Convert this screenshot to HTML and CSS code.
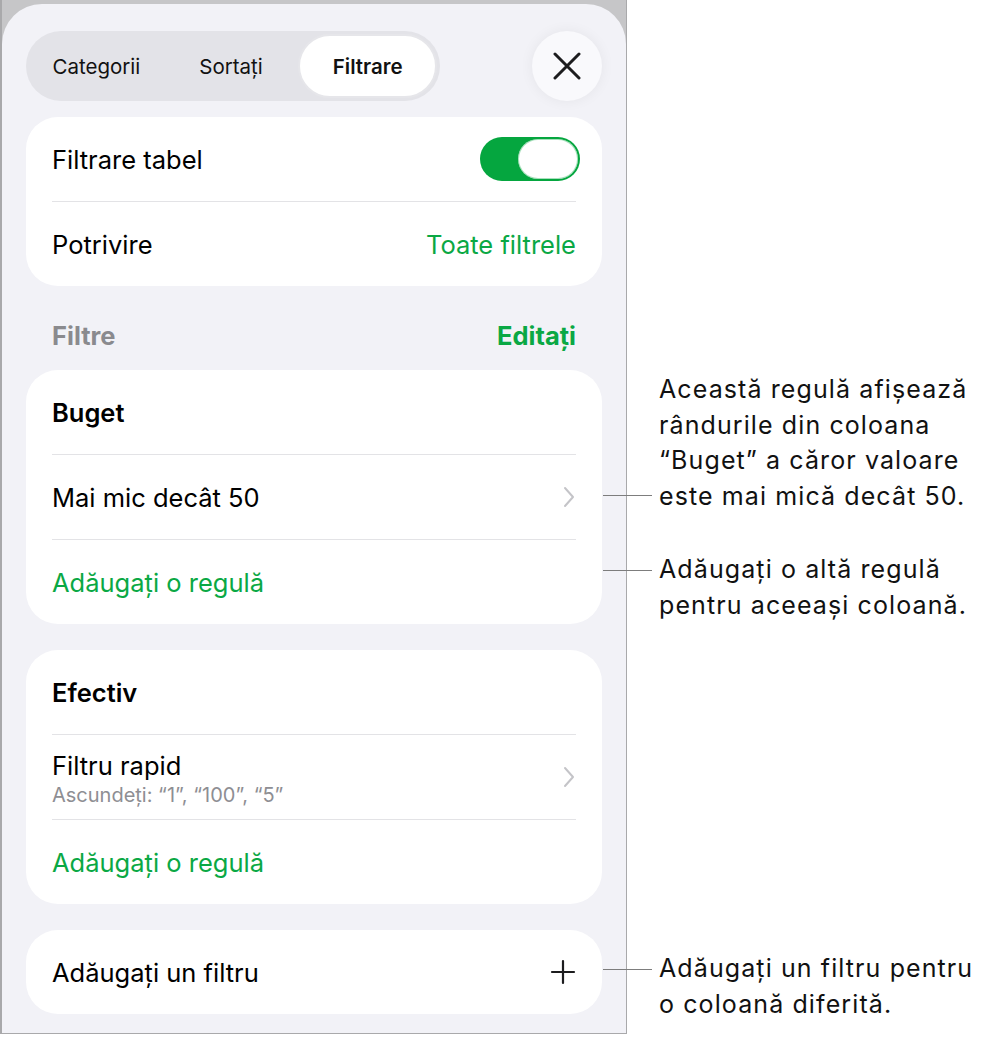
FILE: index.html
```html
<!DOCTYPE html>
<html lang="ro">
<head>
  <meta charset="utf-8">
  <title>Filtrare tabel</title>
  <link rel="stylesheet" href="styles.css">
</head>
<body>
  <div class="page">
    <div class="frame">
      <div class="sheet">
        <div class="top-bar">
          <div class="segmented">
            <div class="segment">Categorii</div>
            <div class="segment">Sortați</div>
            <div class="segment selected">Filtrare</div>
          </div>
          <div class="close-btn">
            <svg width="28" height="28" viewBox="0 0 28 28">
              <path d="M2 2 L26 26 M26 2 L2 26" stroke="#1c1c1e" stroke-width="3" stroke-linecap="round" fill="none"/>
            </svg>
          </div>
        </div>

        <div class="card">
          <div class="row">
            <span>Filtrare tabel</span>
            <div class="toggle"><div class="knob"></div></div>
          </div>
          <div class="row">
            <span>Potrivire</span>
            <span class="green">Toate filtrele</span>
          </div>
        </div>

        <div class="section-header">
          <span class="muted">Filtre</span>
          <span class="green">Editați</span>
        </div>

        <div class="card">
          <div class="row"><span class="bold">Buget</span></div>
          <div class="row">
            <span>Mai mic decât 50</span>
            <svg class="chevron" width="12" height="22" viewBox="0 0 12 22">
              <path d="M2 2 L10 11 L2 20" stroke="#c4c4c8" stroke-width="2" stroke-linecap="round" stroke-linejoin="round" fill="none"/>
            </svg>
          </div>
          <div class="row"><span class="green">Adăugați o regulă</span></div>
        </div>

        <div class="card">
          <div class="row"><span class="bold">Efectiv</span></div>
          <div class="row">
            <div class="two-line">
              <span>Filtru rapid</span>
              <span class="sub">Ascundeți: “1”, “100”, “5”</span>
            </div>
            <svg class="chevron" width="12" height="22" viewBox="0 0 12 22">
              <path d="M2 2 L10 11 L2 20" stroke="#c4c4c8" stroke-width="2" stroke-linecap="round" stroke-linejoin="round" fill="none"/>
            </svg>
          </div>
          <div class="row"><span class="green">Adăugați o regulă</span></div>
        </div>

        <div class="card">
          <div class="row">
            <span>Adăugați un filtru</span>
            <svg class="plus" width="26" height="26" viewBox="0 0 26 26">
              <path d="M13 2 V24 M2 13 H24" stroke="#1c1c1e" stroke-width="2.2" stroke-linecap="round" fill="none"/>
            </svg>
          </div>
        </div>
      </div>
    </div>

    <!-- callouts pointing at rows in the sheet -->
    <div class="callout callout-rule">
      <span class="leader"></span>
      <p>Această regulă afișează<br>rândurile din coloana<br>“Buget” a căror valoare<br>este mai mică decât 50.</p>
    </div>
    <div class="callout callout-add-rule">
      <span class="leader"></span>
      <p>Adăugați o altă regulă<br>pentru aceeași coloană.</p>
    </div>
    <div class="callout callout-add-filter">
      <span class="leader"></span>
      <p>Adăugați un filtru pentru<br>o coloană diferită.</p>
    </div>
  </div>
</body>
</html>
```

FILE: styles.css
```css
body {
  margin: 0;
  background-color: #fff;
  font-family: Inter, "Noto Sans", sans-serif;
  color: #000;
}

.page {
  position: relative;
  width: 987px;
  height: 1037px;
}

.frame {
  width: 627px;
  height: 1034px;
  padding-top: 4px;
  box-sizing: border-box;
  background-color: #c6c6c8;
  border: 1px solid #a9a9ab;
  border-top: none;
  border-left-width: 2px;
}

.sheet {
  height: 100%;
  background-color: #f2f2f7;
  border-radius: 40px 40px 0 0;
  padding: 27px 24px 0;
  box-sizing: border-box;
}

.top-bar {
  display: flex;
  justify-content: space-between;
  align-items: center;
  margin-bottom: 16px;
}

.segmented {
  display: flex;
  width: 414px;
  height: 70px;
  padding: 3px;
  box-sizing: border-box;
  background-color: #e3e3e8;
  border-radius: 35px;
}

.segment {
  flex: 1;
  display: flex;
  align-items: center;
  justify-content: center;
  font-size: 20.5px;
  color: #111;
}

.segment.selected {
  background-color: #fff;
  border: 2px solid #e6e6ea;
  border-radius: 32px;
  font-weight: 600;
}

.close-btn {
  width: 70px;
  height: 70px;
  border-radius: 50%;
  background-color: #f9f9fc;
  box-shadow: 0 0 14px rgba(0, 0, 0, 0.06);
  display: flex;
  align-items: center;
  justify-content: center;
}

.card {
  background-color: #fff;
  border-radius: 32px;
  margin-bottom: 26px;
}

.row {
  display: flex;
  align-items: center;
  justify-content: space-between;
  height: 84px;
  margin: 0 26px;
  font-size: 25.5px;
}

.row + .row {
  border-top: 1px solid #e3e3e6;
}

.bold {
  font-weight: 600;
}

.green {
  color: #0aa844;
}

.section-header {
  display: flex;
  justify-content: space-between;
  align-items: center;
  height: 84px;
  padding-top: 14px;
  box-sizing: border-box;
  margin: -26px 26px 0;
  font-size: 25.5px;
  font-weight: 700;
}

.section-header .muted {
  color: #8a8a8e;
}

.two-line {
  display: flex;
  flex-direction: column;
  margin-top: 2px;
}

.two-line .sub {
  font-size: 20px;
  color: #8e8e93;
  margin-top: 2px;
}

.chevron {
  margin-right: 1px;
}

.plus {
  margin-right: 0;
}

.toggle {
  width: 100px;
  height: 44px;
  border-radius: 22px;
  background-color: #05a63f;
  padding: 2px;
  box-sizing: border-box;
  display: flex;
  justify-content: flex-end;
  margin-right: -4px;
}

.knob {
  width: 60px;
  height: 40px;
  border-radius: 20px;
  background-color: #fff;
  box-shadow: inset 0 0 0 1px rgba(5, 166, 63, 0.35);
}

/* callouts */
.callout {
  position: absolute;
  left: 603px;
  display: flex;
}

.callout p {
  margin: 0 0 0 7px;
  font-size: 25px;
  line-height: 35.5px;
  color: #111;
  letter-spacing: 1.1px;
}

.leader {
  width: 49px;
  height: 1px;
  background-color: #7d7d7d;
}

.callout-rule {
  top: 372px;
  align-items: flex-end;
}

.callout-rule .leader {
  margin-bottom: 18px;
}

.callout-add-rule {
  top: 552px;
  align-items: flex-start;
}

.callout-add-rule .leader {
  margin-top: 18px;
}

.callout-add-filter {
  top: 951px;
  align-items: flex-start;
}

.callout-add-filter .leader {
  margin-top: 18px;
}
```
